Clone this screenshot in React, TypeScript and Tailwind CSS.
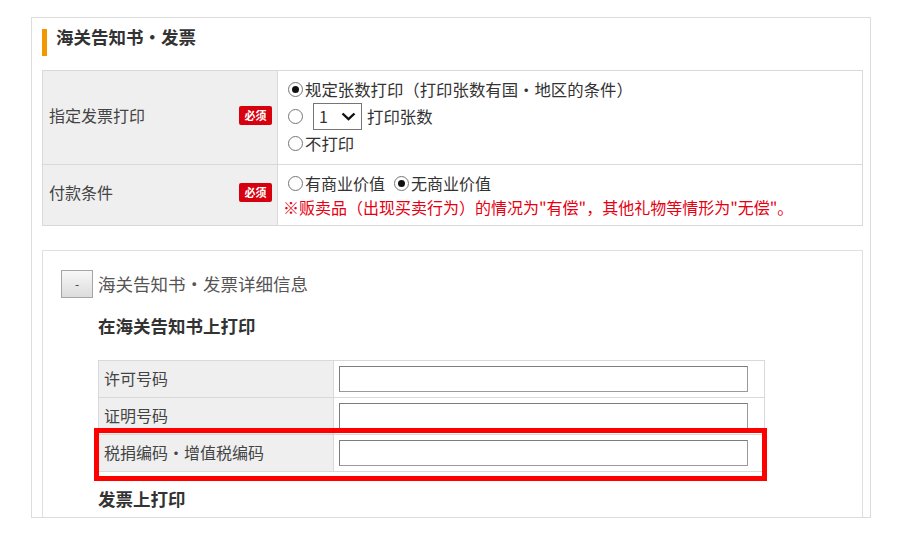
import React from "react";

const Radio = ({ checked = false }: { checked?: boolean }) => (
	<span className="flex-none w-[15px] h-[15px] rounded-full border border-[#777] bg-white flex items-center justify-center">
		{checked && <span className="w-[7px] h-[7px] rounded-full bg-[#111]" />}
	</span>
);

const Badge = () => (
	<span className="flex-none w-[33px] h-[19px] rounded-[2px] bg-[#d7000f] text-white text-[11px] font-bold leading-[19px] text-center">
		必须
	</span>
);

const TextInput = () => (
	<div className="w-[409px] h-[26px] border border-[#9a9a9a] border-t-[#7d7d7d] border-l-[#7d7d7d] bg-white" />
);

const DetailRow = ({ label, first, children }: { label: string; first?: boolean; children?: React.ReactNode }) => (
	<div className={`relative flex ${first ? "h-[36px]" : "h-[37px] border-t border-[#d9d9d9]"}`}>
		<div className="w-[235px] flex-none bg-[#efefef] border-r border-[#d9d9d9] pl-[5px] pb-[3px] flex items-center text-[16px] text-[#444]">
			{label}
		</div>
		<div className="flex-1 flex items-center pl-[5px]">
			<TextInput />
		</div>
		{children}
	</div>
);

export default function App() {
	return (
		<div
			className="w-[900px] h-[536px] bg-white pt-[17px] pl-[31px] text-[#333]"
			style={{ fontFamily: '"Noto Sans CJK SC", "Noto Sans", sans-serif' }}
		>
			{/* Outer panel */}
			<div className="w-[840px] h-[501px] border border-[#dcdcdc] overflow-hidden pt-[11px] pl-[10px] pr-[7px]">
				{/* Heading */}
				<div className="flex items-start">
					<span className="w-[5px] h-[27px] bg-[#f39800] flex-none" />
					<h2 className="ml-[9px] -mt-[3px] text-[17.5px] font-bold leading-[22px] text-[#333]">
						海关告知书・发票
					</h2>
				</div>

				{/* Table 1 */}
				<div className="mt-[14px] border border-[#d9d9d9] text-[16px]">
					<div className="flex h-[93px]">
						<div className="w-[235px] flex-none bg-[#efefef] border-r border-[#d9d9d9] pl-[6px] pr-[5px] pb-[5px] flex items-center justify-between">
							<span className="text-[#444]">指定发票打印</span>
							<Badge />
						</div>
						<div className="flex-1 pl-[10px] pt-[5px] flex flex-col text-[16.4px]">
							<div className="h-[26px] flex items-center gap-[2px]">
								<Radio checked />
								<span>规定张数打印（打印张数有国・地区的条件）</span>
							</div>
							<div className="h-[28px] flex items-center">
								<Radio />
								<div className="ml-[10px] w-[49px] h-[27px] border border-[#767676] bg-white flex items-center justify-between pl-[5px] pr-[5px]">
									<span className="leading-none text-[16px]">1</span>
									<svg width="15" height="9" viewBox="0 0 15 9">
										<polyline points="1.5,1.5 7.5,7.2 13.5,1.5" fill="none" stroke="#111" strokeWidth="2.4" />
									</svg>
								</div>
								<span className="ml-[5px]">打印张数</span>
							</div>
							<div className="h-[26px] flex items-center gap-[2px]">
								<Radio />
								<span>不打印</span>
							</div>
						</div>
					</div>
					<div className="flex h-[61px] border-t border-[#d9d9d9]">
						<div className="w-[235px] flex-none bg-[#efefef] border-r border-[#d9d9d9] pl-[6px] pr-[5px] pb-[6px] flex items-center justify-between">
							<span className="text-[#444]">付款条件</span>
							<Badge />
						</div>
						<div className="flex-1 pl-[5px] pt-[5px] flex flex-col">
							<div className="h-[26px] flex items-center pl-[5px]">
								<Radio />
								<span className="ml-[2px]">有商业价值</span>
								<span className="ml-[9px]">
									<Radio checked />
								</span>
								<span className="ml-[2px]">无商业价值</span>
							</div>
							<div className="h-[22px] flex items-center text-[#e60012]">
								※贩卖品（出现买卖行为）的情况为"有偿"，其他礼物等情形为"无偿"。
							</div>
						</div>
					</div>
				</div>

				{/* Detail panel */}
				<div className="mt-[24px] h-[400px] border border-[#e0e0e0] pt-[19px] pl-[18px]">
					<div className="flex items-center">
						<button className="w-[32px] h-[28px] border border-[#a5a5a5] bg-linear-to-b from-[#f8f8f8] to-[#dcdcdc] text-[12px] text-[#333] leading-none">
							-
						</button>
						<span className="ml-[5px] text-[17.5px] text-[#555]">海关告知书・发票详细信息</span>
					</div>

					<div className="pl-[37px]">
						<h3 className="mt-[17px] text-[17.5px] font-bold leading-[22px] text-[#333]">在海关告知书上打印</h3>

						<div className="mt-[23px] w-[667px] border border-[#d9d9d9]">
							<DetailRow label="许可号码" first />
							<DetailRow label="证明号码" />
							<DetailRow label="税捐编码・增值税编码">
								<div className="absolute -top-[7px] -left-[5px] -right-[3px] -bottom-[10px] border-[5px] border-[#ff0000] pointer-events-none" />
							</DetailRow>
						</div>

						<h3 className="mt-[16px] text-[17.5px] font-bold leading-[22px] text-[#333]">发票上打印</h3>
					</div>
				</div>
			</div>
		</div>
	);
}
